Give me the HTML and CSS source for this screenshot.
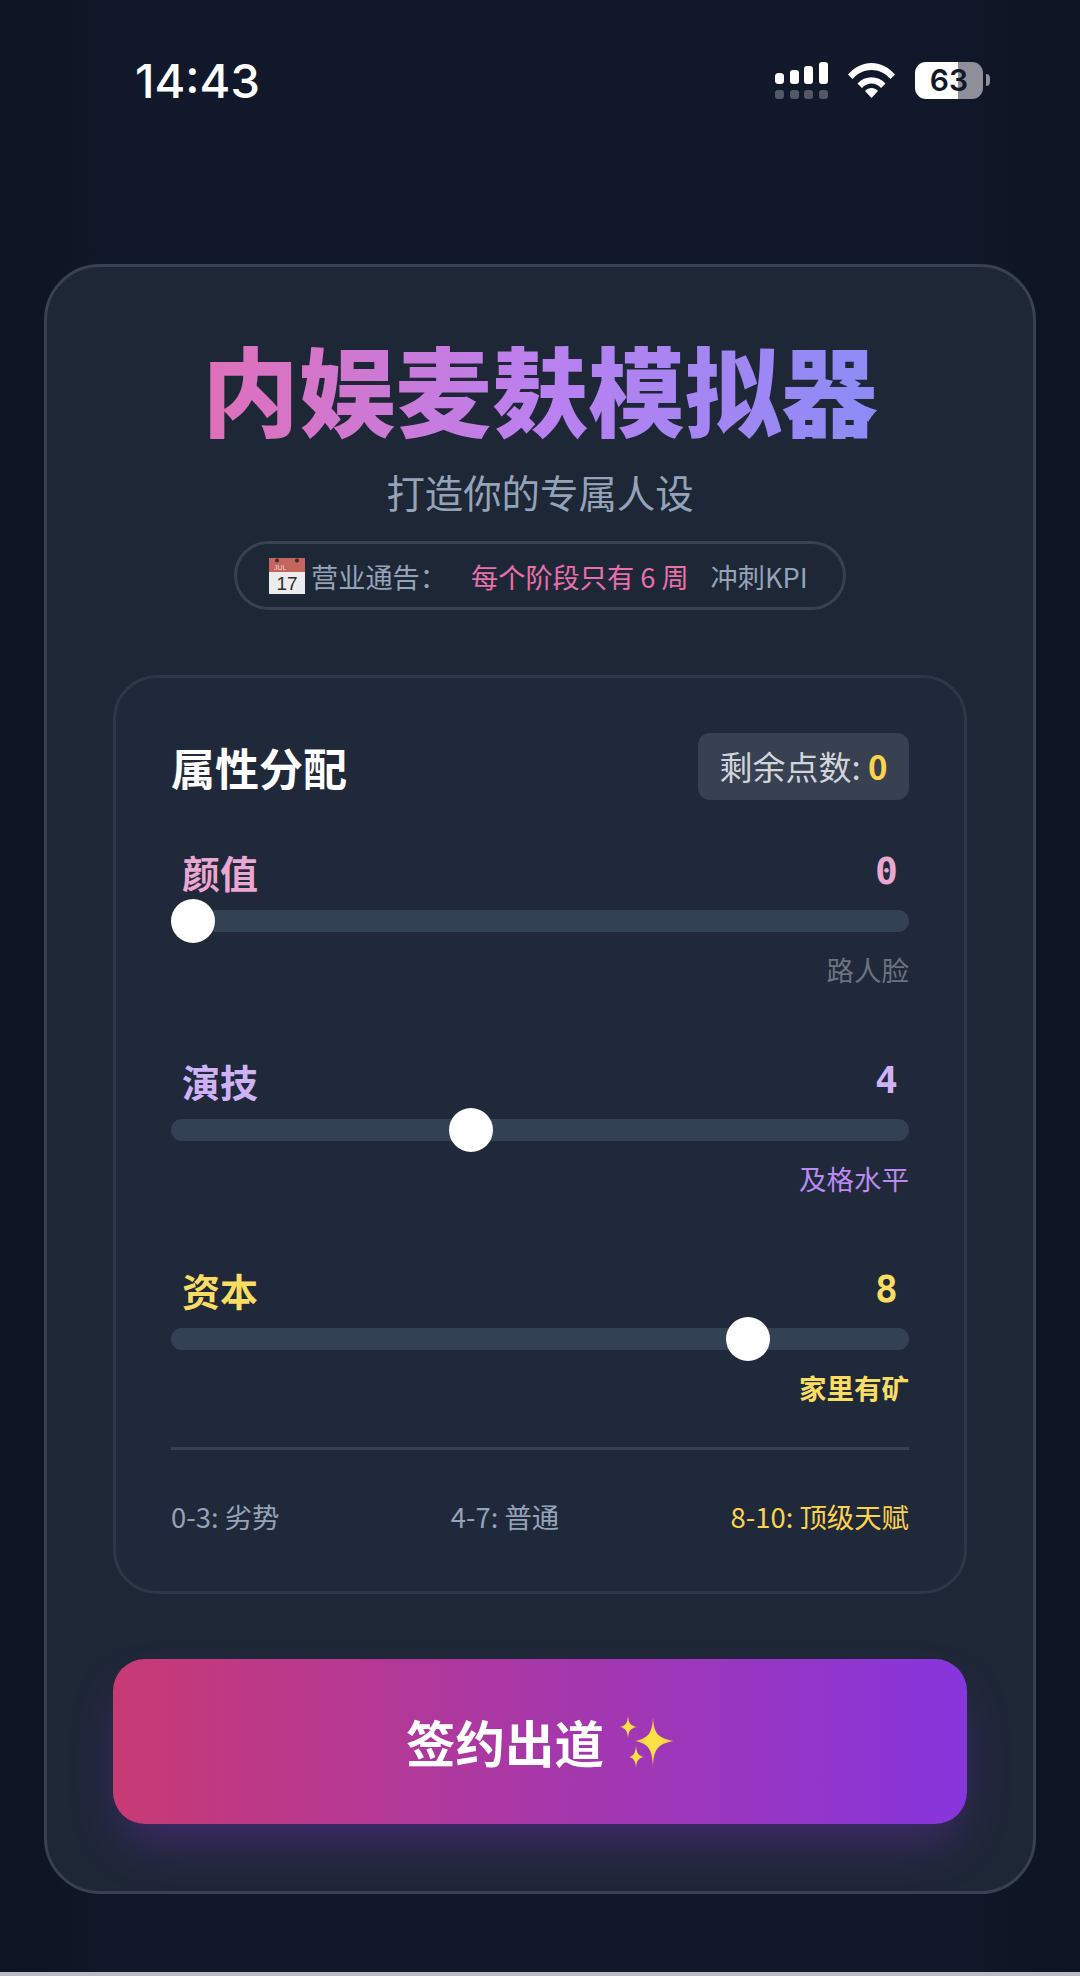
FILE: index.html
```html
<!DOCTYPE html>
<html lang="zh-CN">
<head>
  <meta charset="UTF-8" />
  <meta name="viewport" content="width=device-width, initial-scale=1.0"/>
  <title>内娱麦麸模拟器</title>
  <link rel="stylesheet" href="styles.css">
</head>
<body>
  <div class="status-bar">
    <span class="time">14:43</span>
    <div class="status-icons">
      <svg class="signal" width="53" height="37" viewBox="0 0 53 37" fill="#fff">
        <rect x="0" y="11" width="9" height="11" rx="3.5"/>
        <rect x="15" y="8" width="9" height="14" rx="3"/>
        <rect x="29" y="4" width="9" height="18" rx="3"/>
        <rect x="44" y="0" width="9" height="22" rx="3"/>
        <g opacity="0.28">
          <rect x="0" y="28" width="9" height="9" rx="3"/>
          <rect x="15" y="28" width="9" height="9" rx="3"/>
          <rect x="29" y="28" width="9" height="9" rx="3"/>
          <rect x="44" y="28" width="9" height="9" rx="3"/>
        </g>
      </svg>
      <svg class="wifi" width="47" height="36" viewBox="0 0 47 36" fill="#fff">
        <path d="M0 12.5C13-3 34-3 47 12.5L42.500 17C32 5 15 5 4.500 17Z"/>
        <path d="M9.500 21.500C17 13 30 13 37.500 21.500L33 26C28 20 19 20 14 26Z"/>
        <path d="M17 29C20.500 25 26.500 25 30 29L23.500 36Z"/>
      </svg>
      <div class="battery"><span>63</span></div>
      <div class="battery-nub"></div>
    </div>
  </div>

  <main class="card">
    <h1 class="title">内娱麦麸模拟器</h1>
    <p class="subtitle">打造你的专属人设</p>
    <div class="notice">
      <svg class="calendar" width="36" height="36" viewBox="0 0 36 36">
        <rect width="36" height="36" fill="#ececec"/>
        <rect width="36" height="14" fill="#c4655f"/>
        <circle cx="8" cy="2.500" r="2" fill="#33302f"/>
        <circle cx="28" cy="2.500" r="2" fill="#33302f"/>
        <text x="5" y="12" font-size="7" fill="#f3d5d2" font-family="Liberation Sans">JUL</text>
        <text x="18" y="32" font-size="19" fill="#2b2b2b" text-anchor="middle" font-family="Liberation Sans">17</text>
      </svg>
      <span class="notice-label">营业通告：</span>
      <span class="notice-pink">每个阶段只有 6 周</span>
      <span class="notice-end">冲刺KPI</span>
    </div>

    <section class="panel">
      <div class="panel-head">
        <h2>属性分配</h2>
        <div class="points">剩余点数: <b>0</b></div>
      </div>

      <div class="stat stat-pink">
        <div class="stat-row"><span class="stat-name">颜值</span><span class="stat-value">0</span></div>
        <input type="range" min="0" max="10" value="0" />
        <div class="stat-note muted">路人脸</div>
      </div>

      <div class="stat stat-purple">
        <div class="stat-row"><span class="stat-name">演技</span><span class="stat-value">4</span></div>
        <input type="range" min="0" max="10" value="4" />
        <div class="stat-note">及格水平</div>
      </div>

      <div class="stat stat-yellow">
        <div class="stat-row"><span class="stat-name">资本</span><span class="stat-value">8</span></div>
        <input type="range" min="0" max="10" value="8" />
        <div class="stat-note strong">家里有矿</div>
      </div>

      <div class="legend">
        <span>0-3: 劣势</span>
        <span>4-7: 普通</span>
        <span class="legend-top">8-10: 顶级天赋</span>
      </div>
    </section>

    <button class="sign-btn">签约出道
      <svg class="sparkles" width="54" height="53" viewBox="0 0 54 53">
        <defs>
          <radialGradient id="gold">
            <stop offset="0.4" stop-color="#fde047"/>
            <stop offset="1" stop-color="#f5b83a"/>
          </radialGradient>
        </defs>
        <path fill="url(#gold)" d="M33 2C34 18 37 23 54 26C37 29 34 34 33 52C32 34 29 29 15 26C29 23 32 18 33 2Z"/>
        <path fill="url(#gold)" d="M8 0C8.500 8 10 10.500 17 12C10 13.500 8.500 16 8 24C7.500 16 6 13.500 0 12C6 10.500 7.500 8 8 0Z"/>
        <path fill="url(#gold)" d="M16 30C16.500 38 18 40.500 24 42C18 43.500 16.500 46 16 53C15.500 46 14 43.500 9 42C14 40.500 15.500 38 16 30Z"/>
      </svg>
    </button>
  </main>

  <div class="page-end"></div>
</body>
</html>
```

FILE: styles.css
```css
* {
  box-sizing: border-box;
}
body {
  margin: 0;
  width: 1080px;
  height: 1976px;
  display: flex;
  flex-direction: column;
  background: linear-gradient(90deg, #0c1322, #111829 12%, #111829 88%, #0c1322);
  font-family: "Noto Sans CJK SC", "Noto Sans", sans-serif;
  color: #fff;
}

/* status bar */
.status-bar {
  height: 264px;
  padding: 58px 90px 0 135px;
  display: flex;
  justify-content: space-between;
  align-items: flex-start;
}
.time {
  font-family: Inter, sans-serif;
  font-size: 47px;
  font-weight: 500;
  line-height: 46px;
}
.status-icons {
  display: flex;
  align-items: flex-start;
  margin-top: 4px;
}
.signal {
  margin-right: 20px;
}
.wifi {
  margin-right: 20px;
}
.battery {
  width: 68px;
  height: 37px;
  border-radius: 11px;
  background: linear-gradient(90deg, #fff 63%, #8e8f99 63%);
  color: #111827;
  font-family: Inter, sans-serif;
  font-size: 30px;
  font-weight: 600;
  line-height: 37px;
  text-align: center;
}
.battery-nub {
  width: 4px;
  height: 12px;
  margin: 12px 0 0 3px;
  border-radius: 0 6px 6px 0;
  background: #8e8f99;
}

/* main card */
.card {
  margin: 0 44px;
  height: 1630px;
  padding: 60px 66px 0;
  background: #1e2736;
  border: 3px solid #374151;
  border-radius: 56px;
  display: flex;
  flex-direction: column;
  align-items: center;
}
.title {
  margin: 0;
  font-size: 96.500px;
  font-weight: 900;
  line-height: 120px;
  white-space: nowrap;
  background: linear-gradient(90deg, #e070b8, #bb80f0 50%, #8b8cf6);
  -webkit-background-clip: text;
  background-clip: text;
  color: transparent;
}
.subtitle {
  margin: 16px 0 0;
  font-size: 38.400px;
  line-height: 56px;
  color: #94a3b8;
}
.notice {
  margin-top: 22px;
  width: 612px;
  height: 69px;
  padding-left: 32px;
  border: 3px solid #374151;
  border-radius: 35px;
  display: flex;
  align-items: center;
  font-size: 27.200px;
  color: #94a3b8;
  white-space: nowrap;
}
.calendar {
  margin-right: 6px;
}
.notice-label {
  width: 160px;
}
.notice-pink {
  color: #e870ab;
}
.notice-end {
  margin-left: 22px;
}

/* attribute panel */
.panel {
  margin-top: 65px;
  width: 854px;
  height: 919px;
  padding: 55px 55px 0;
  background: #202939;
  border: 3px solid #2d3748;
  border-radius: 44px;
}
.panel-head {
  display: flex;
  justify-content: space-between;
  align-items: center;
  height: 67px;
  margin-bottom: 44px;
}
.panel-head h2 {
  margin: 0;
  font-size: 44px;
  font-weight: 700;
}
.points {
  width: 211px;
  height: 67px;
  background: #374151;
  border-radius: 12px;
  font-size: 33px;
  line-height: 67px;
  text-align: center;
  color: #d1d5db;
  white-space: nowrap;
}
.points b {
  color: #fcd34d;
}

.stat {
  height: 209px;
}
.stat-row {
  display: flex;
  justify-content: space-between;
  align-items: center;
  height: 55px;
  padding: 0 11px;
  font-weight: 700;
}
.stat-name {
  font-size: 38px;
}
.stat-value {
  margin-top: -2px;
  font-family: "DejaVu Sans Mono", monospace;
  font-size: 38px;
}
.stat-pink .stat-row {
  color: #eaa7d2;
}
.stat-purple .stat-row {
  color: #cfb2f6;
}
.stat-purple .stat-note {
  color: #b98af0;
}
.stat-yellow .stat-row,
.stat-yellow .stat-note {
  color: #f9dd63;
}
.stat input {
  -webkit-appearance: none;
  appearance: none;
  display: block;
  width: 100%;
  height: 44px;
  margin: 0;
  background: transparent;
}
.stat input::-webkit-slider-runnable-track {
  height: 22px;
  border-radius: 11px;
  background: #334155;
}
.stat input::-webkit-slider-thumb {
  -webkit-appearance: none;
  width: 44px;
  height: 44px;
  margin-top: -11px;
  border-radius: 50%;
  background: #fff;
}
.stat-note {
  margin-top: 6px;
  text-align: right;
  font-size: 27.500px;
  line-height: 40px;
}
.stat-note.muted {
  color: #6b7280;
}
.stat-note.strong {
  font-weight: 700;
}

.legend {
  margin-top: -24px;
  padding-top: 46px;
  border-top: 3px solid #374151;
  display: flex;
  justify-content: space-between;
  font-size: 27.400px;
  line-height: 40px;
  color: #94a3b8;
}
.legend-top {
  color: #fcd34d;
}

/* button */
.sign-btn {
  margin-top: 65px;
  width: 854px;
  height: 165px;
  border: none;
  border-radius: 32px;
  background: linear-gradient(90deg, #c83a74, #8735de);
  box-shadow: 0 25px 50px -12px rgba(147, 51, 234, 0.35);
  color: #fff;
  font-family: inherit;
  font-size: 49.500px;
  font-weight: 700;
  display: flex;
  justify-content: center;
  align-items: center;
  gap: 16px;
}

.page-end {
  margin-top: auto;
  height: 4px;
  background: #b9bbc0;
}
```
